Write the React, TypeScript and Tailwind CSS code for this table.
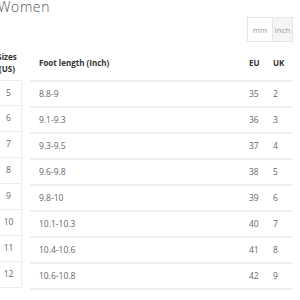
const rows = [
  ["5", "8.8-9", "35", "2"],
  ["6", "9.1-9.3", "36", "3"],
  ["7", "9.3-9.5", "37", "4"],
  ["8", "9.6-9.8", "38", "5"],
  ["9", "9.8-10", "39", "6"],
  ["10", "10.1-10.3", "40", "7"],
  ["11", "10.4-10.6", "41", "8"],
  ["12", "10.6-10.8", "42", "9"],
];

export default function App() {
  return (
    <div className="w-[300px] h-[300px] overflow-hidden bg-white font-['Open_Sans',sans-serif] text-[#666]">
      <div className="-ml-[2px] -mt-[2px] h-[17px] text-[14px] leading-[17px] tracking-[0.6px] text-[#555] font-light">
        Women
      </div>
      <div className="flex justify-end pr-[7px] mt-[2px]">
        <div className="flex h-[25px] border border-[#e6e6e6] text-[8px] text-[#999]">
          <div className="w-[24px] flex items-center justify-center">mm</div>
          <div className="w-[20px] flex items-center justify-center border-l border-[#e6e6e6] bg-[#f4f6f6]">
            Inch
          </div>
        </div>
      </div>
      <div className="-ml-[4px] mt-[4px]">
        <div className="flex h-[34px] text-[8px] font-bold text-[#333]">
          <div className="w-[26px] flex flex-col items-center justify-center leading-[12px] text-center -translate-x-[2px]">
            <span>Sizes</span>
            <span>(US)</span>
          </div>
          <div className="w-[8px]" />
          <div className="flex-1 flex items-center pr-[7px]">
            <div className="flex-1 pl-[9px]">Foot length (Inch)</div>
            <div className="w-[24px]">EU</div>
            <div className="w-[20px]">UK</div>
          </div>
        </div>
        {rows.map(([us, foot, eu, uk], i) => (
          <div key={us} className="flex h-[26px] text-[8.5px]">
            <div
              className={`w-[26px] flex items-center justify-center border-r border-b border-[#ececec] ${
                i === 0 ? "border-t" : ""
              }`}
            >
              {us}
            </div>
            <div className="w-[8px]" />
            <div className="flex-1 mr-[7px] flex items-center border-t-2 border-[#f0f0f0]">
              <div className="flex-1 pl-[9px]">{foot}</div>
              <div className="w-[24px]">{eu}</div>
              <div className="w-[20px]">{uk}</div>
            </div>
          </div>
        ))}
        <div className="flex">
          <div className="w-[34px]" />
          <div className="flex-1 mr-[7px] border-t-2 border-[#f0f0f0]" />
        </div>
      </div>
    </div>
  );
}
